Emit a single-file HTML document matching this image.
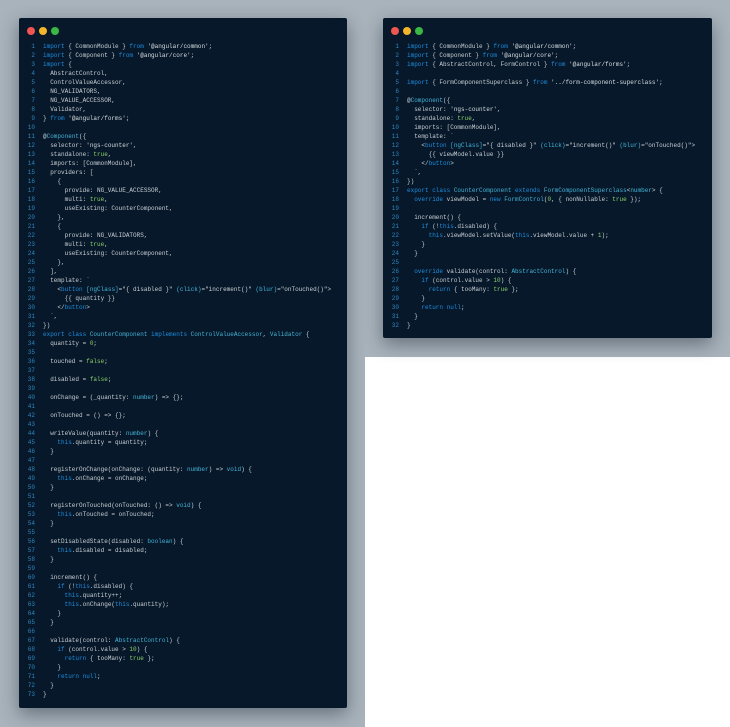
<!DOCTYPE html>
<html><head><meta charset="utf-8"><style>
*{margin:0;padding:0;box-sizing:border-box}
html,body{width:730px;height:727px;overflow:hidden}
body{background:#a9b3bc;position:relative;font-family:"Liberation Mono",monospace}
.white{position:absolute;left:365px;top:357px;width:365px;height:370px;background:#fff}
.win{position:absolute;background:#061829;border-radius:2px;box-shadow:0 6px 18px rgba(20,30,45,.45)}
.dot{position:absolute;top:9px;width:8px;height:8px;border-radius:50%}
.code{position:absolute;top:24px;font-size:6px;line-height:9px;color:#c9ced4}
.l{height:9px;white-space:pre}
.n{display:inline-block;width:16px;text-align:right;color:#2f86c0;margin-right:8px}
.k{color:#1f8ee0}.c{color:#45b3d8}.g{color:#8ccf6a}.s{color:#d8dde2}
</style></head><body>
<div class="white"></div>
<div class="win" style="left:19px;top:18px;width:328px;height:690px">
<div class="dot" style="left:8px;background:#f0564f"></div>
<div class="dot" style="left:20px;background:#f5b52a"></div>
<div class="dot" style="left:32px;background:#3bb843"></div>
<div class="code" style="left:0">
<div class="l"><span class="n">1</span><span class="k">import</span> { CommonModule } <span class="k">from</span> <span class="s">'@angular/common'</span>;</div>
<div class="l"><span class="n">2</span><span class="k">import</span> { Component } <span class="k">from</span> <span class="s">'@angular/core'</span>;</div>
<div class="l"><span class="n">3</span><span class="k">import</span> {</div>
<div class="l"><span class="n">4</span>  AbstractControl,</div>
<div class="l"><span class="n">5</span>  ControlValueAccessor,</div>
<div class="l"><span class="n">6</span>  NG_VALIDATORS,</div>
<div class="l"><span class="n">7</span>  NG_VALUE_ACCESSOR,</div>
<div class="l"><span class="n">8</span>  Validator,</div>
<div class="l"><span class="n">9</span>} <span class="k">from</span> <span class="s">'@angular/forms'</span>;</div>
<div class="l"><span class="n">10</span></div>
<div class="l"><span class="n">11</span>@<span class="c">Component</span>({</div>
<div class="l"><span class="n">12</span>  selector: <span class="s">'ngs-counter'</span>,</div>
<div class="l"><span class="n">13</span>  standalone: <span class="g">true</span>,</div>
<div class="l"><span class="n">14</span>  imports: [CommonModule],</div>
<div class="l"><span class="n">15</span>  providers: [</div>
<div class="l"><span class="n">16</span>    {</div>
<div class="l"><span class="n">17</span>      provide: NG_VALUE_ACCESSOR,</div>
<div class="l"><span class="n">18</span>      multi: <span class="g">true</span>,</div>
<div class="l"><span class="n">19</span>      useExisting: CounterComponent,</div>
<div class="l"><span class="n">20</span>    },</div>
<div class="l"><span class="n">21</span>    {</div>
<div class="l"><span class="n">22</span>      provide: NG_VALIDATORS,</div>
<div class="l"><span class="n">23</span>      multi: <span class="g">true</span>,</div>
<div class="l"><span class="n">24</span>      useExisting: CounterComponent,</div>
<div class="l"><span class="n">25</span>    },</div>
<div class="l"><span class="n">26</span>  ],</div>
<div class="l"><span class="n">27</span>  template: `</div>
<div class="l"><span class="n">28</span>    &lt;<span class="k">button</span> <span class="c">[ngClass]</span>="{ disabled }" <span class="c">(click)</span>="increment()" <span class="c">(blur)</span>="onTouched()"&gt;</div>
<div class="l"><span class="n">29</span>      {{ quantity }}</div>
<div class="l"><span class="n">30</span>    &lt;/<span class="k">button</span>&gt;</div>
<div class="l"><span class="n">31</span>  `,</div>
<div class="l"><span class="n">32</span>})</div>
<div class="l"><span class="n">33</span><span class="k">export class</span> <span class="c">CounterComponent</span> <span class="k">implements</span> <span class="c">ControlValueAccessor</span>, <span class="c">Validator</span> {</div>
<div class="l"><span class="n">34</span>  quantity = <span class="g">0</span>;</div>
<div class="l"><span class="n">35</span></div>
<div class="l"><span class="n">36</span>  touched = <span class="g">false</span>;</div>
<div class="l"><span class="n">37</span></div>
<div class="l"><span class="n">38</span>  disabled = <span class="g">false</span>;</div>
<div class="l"><span class="n">39</span></div>
<div class="l"><span class="n">40</span>  onChange = (_quantity: <span class="c">number</span>) =&gt; {};</div>
<div class="l"><span class="n">41</span></div>
<div class="l"><span class="n">42</span>  onTouched = () =&gt; {};</div>
<div class="l"><span class="n">43</span></div>
<div class="l"><span class="n">44</span>  writeValue(quantity: <span class="c">number</span>) {</div>
<div class="l"><span class="n">45</span>    <span class="k">this</span>.quantity = quantity;</div>
<div class="l"><span class="n">46</span>  }</div>
<div class="l"><span class="n">47</span></div>
<div class="l"><span class="n">48</span>  registerOnChange(onChange: (quantity: <span class="c">number</span>) =&gt; <span class="c">void</span>) {</div>
<div class="l"><span class="n">49</span>    <span class="k">this</span>.onChange = onChange;</div>
<div class="l"><span class="n">50</span>  }</div>
<div class="l"><span class="n">51</span></div>
<div class="l"><span class="n">52</span>  registerOnTouched(onTouched: () =&gt; <span class="c">void</span>) {</div>
<div class="l"><span class="n">53</span>    <span class="k">this</span>.onTouched = onTouched;</div>
<div class="l"><span class="n">54</span>  }</div>
<div class="l"><span class="n">55</span></div>
<div class="l"><span class="n">56</span>  setDisabledState(disabled: <span class="c">boolean</span>) {</div>
<div class="l"><span class="n">57</span>    <span class="k">this</span>.disabled = disabled;</div>
<div class="l"><span class="n">58</span>  }</div>
<div class="l"><span class="n">59</span></div>
<div class="l"><span class="n">60</span>  increment() {</div>
<div class="l"><span class="n">61</span>    <span class="k">if</span> (!<span class="k">this</span>.disabled) {</div>
<div class="l"><span class="n">62</span>      <span class="k">this</span>.quantity++;</div>
<div class="l"><span class="n">63</span>      <span class="k">this</span>.onChange(<span class="k">this</span>.quantity);</div>
<div class="l"><span class="n">64</span>    }</div>
<div class="l"><span class="n">65</span>  }</div>
<div class="l"><span class="n">66</span></div>
<div class="l"><span class="n">67</span>  validate(control: <span class="c">AbstractControl</span>) {</div>
<div class="l"><span class="n">68</span>    <span class="k">if</span> (control.value &gt; <span class="g">10</span>) {</div>
<div class="l"><span class="n">69</span>      <span class="k">return</span> { tooMany: <span class="g">true</span> };</div>
<div class="l"><span class="n">70</span>    }</div>
<div class="l"><span class="n">71</span>    <span class="k">return</span> <span class="k">null</span>;</div>
<div class="l"><span class="n">72</span>  }</div>
<div class="l"><span class="n">73</span>}</div>
</div></div>
<div class="win" style="left:383px;top:18px;width:329px;height:320px">
<div class="dot" style="left:8px;background:#f0564f"></div>
<div class="dot" style="left:20px;background:#f5b52a"></div>
<div class="dot" style="left:32px;background:#3bb843"></div>
<div class="code" style="left:0">
<div class="l"><span class="n">1</span><span class="k">import</span> { CommonModule } <span class="k">from</span> <span class="s">'@angular/common'</span>;</div>
<div class="l"><span class="n">2</span><span class="k">import</span> { Component } <span class="k">from</span> <span class="s">'@angular/core'</span>;</div>
<div class="l"><span class="n">3</span><span class="k">import</span> { AbstractControl, FormControl } <span class="k">from</span> <span class="s">'@angular/forms'</span>;</div>
<div class="l"><span class="n">4</span></div>
<div class="l"><span class="n">5</span><span class="k">import</span> { FormComponentSuperclass } <span class="k">from</span> <span class="s">'../form-component-superclass'</span>;</div>
<div class="l"><span class="n">6</span></div>
<div class="l"><span class="n">7</span>@<span class="c">Component</span>({</div>
<div class="l"><span class="n">8</span>  selector: <span class="s">'ngs-counter'</span>,</div>
<div class="l"><span class="n">9</span>  standalone: <span class="g">true</span>,</div>
<div class="l"><span class="n">10</span>  imports: [CommonModule],</div>
<div class="l"><span class="n">11</span>  template: `</div>
<div class="l"><span class="n">12</span>    &lt;<span class="k">button</span> <span class="c">[ngClass]</span>="{ disabled }" <span class="c">(click)</span>="increment()" <span class="c">(blur)</span>="onTouched()"&gt;</div>
<div class="l"><span class="n">13</span>      {{ viewModel.value }}</div>
<div class="l"><span class="n">14</span>    &lt;/<span class="k">button</span>&gt;</div>
<div class="l"><span class="n">15</span>  `,</div>
<div class="l"><span class="n">16</span>})</div>
<div class="l"><span class="n">17</span><span class="k">export class</span> <span class="c">CounterComponent</span> <span class="k">extends</span> <span class="c">FormComponentSuperclass</span>&lt;<span class="c">number</span>&gt; {</div>
<div class="l"><span class="n">18</span>  <span class="k">override</span> viewModel = <span class="k">new</span> <span class="c">FormControl</span>(<span class="g">0</span>, { nonNullable: <span class="g">true</span> });</div>
<div class="l"><span class="n">19</span></div>
<div class="l"><span class="n">20</span>  increment() {</div>
<div class="l"><span class="n">21</span>    <span class="k">if</span> (!<span class="k">this</span>.disabled) {</div>
<div class="l"><span class="n">22</span>      <span class="k">this</span>.viewModel.setValue(<span class="k">this</span>.viewModel.value + <span class="g">1</span>);</div>
<div class="l"><span class="n">23</span>    }</div>
<div class="l"><span class="n">24</span>  }</div>
<div class="l"><span class="n">25</span></div>
<div class="l"><span class="n">26</span>  <span class="k">override</span> validate(control: <span class="c">AbstractControl</span>) {</div>
<div class="l"><span class="n">27</span>    <span class="k">if</span> (control.value &gt; <span class="g">10</span>) {</div>
<div class="l"><span class="n">28</span>      <span class="k">return</span> { tooMany: <span class="g">true</span> };</div>
<div class="l"><span class="n">29</span>    }</div>
<div class="l"><span class="n">30</span>    <span class="k">return</span> <span class="k">null</span>;</div>
<div class="l"><span class="n">31</span>  }</div>
<div class="l"><span class="n">32</span>}</div>
</div></div>
</body></html>
